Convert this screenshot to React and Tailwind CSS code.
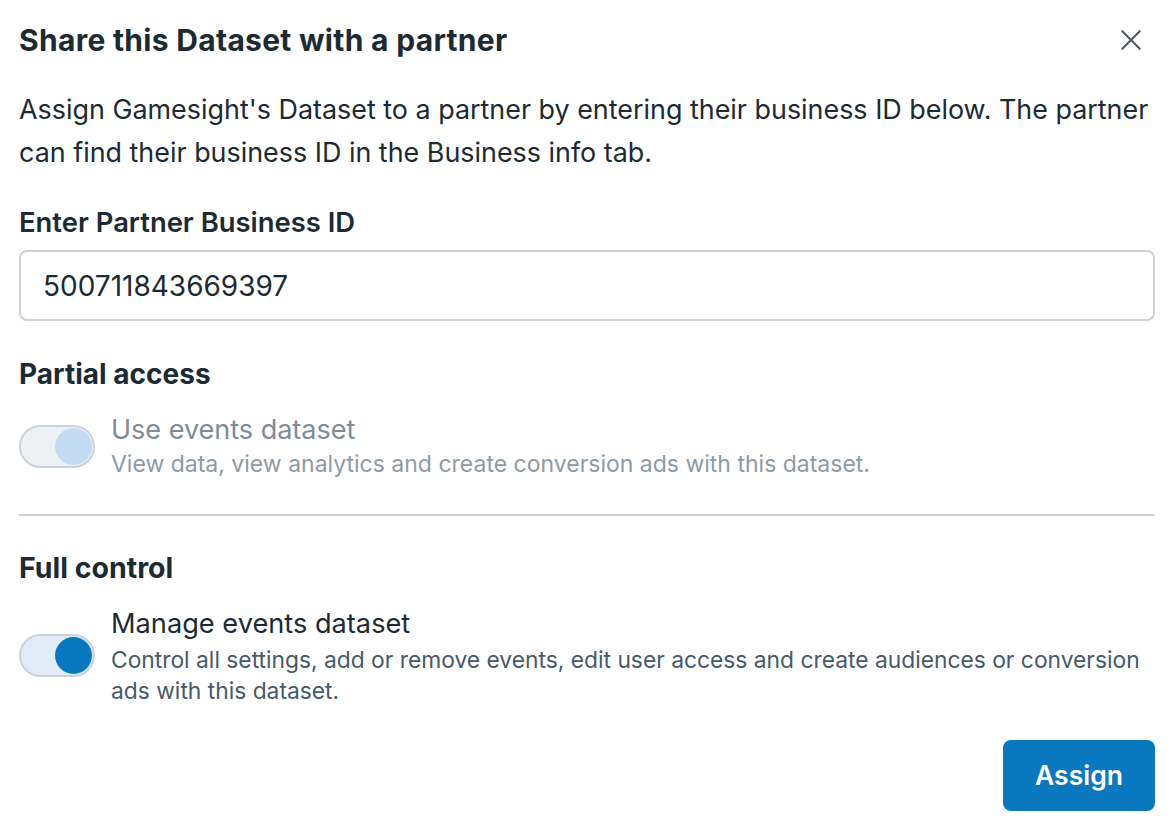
import React, { useState } from "react";

const Toggle = ({ disabled }) => (
  <div
    className={
      disabled
        ? "relative w-[76px] h-[43px] shrink-0 rounded-full border-2 border-[#cbd2d9] bg-[#eef1f4]"
        : "relative w-[76px] h-[43px] shrink-0 rounded-full border-2 border-[#cbd2d9] bg-[#e1ecf6]"
    }
  >
    <div
      className={
        disabled
          ? "absolute top-[1px] right-[1px] w-[37px] h-[37px] rounded-full bg-[#c1dcf4]"
          : "absolute top-[1px] right-[1px] w-[37px] h-[37px] rounded-full bg-[#0a78be]"
      }
    />
  </div>
);

export default function App() {
  const [id, setId] = useState("500711843669397");

  return (
    <div className="w-[1174px] h-[834px] bg-white px-[19px] text-[#1c2b33] font-['Inter',sans-serif]">
      {/* header */}
      <div className="flex items-center justify-between h-[80px]">
        <h2 className="text-[30px] font-bold tracking-[0.3px]">Share this Dataset with a partner</h2>
        <button className="w-[40px] h-[40px] flex items-center justify-center text-[#4f5b64] mr-[4px]">
          <svg width="30" height="30" viewBox="0 0 24 24" fill="none" stroke="currentColor" strokeWidth="1.7" strokeLinecap="round">
            <path d="M5 5l14 14M19 5L5 19" />
          </svg>
        </button>
      </div>

      <p className="text-[26.9px] leading-[43px] mt-[8px]">
        Assign Gamesight's Dataset to a partner by entering their business ID below. The partner can find their business ID in the Business info tab.
      </p>

      <label className="block text-[27.4px] font-semibold mt-[28px] leading-[40px]">Enter Partner Business ID</label>
      <input
        className="mt-[8px] w-full h-[71px] rounded-[8px] border-2 border-[#ccd2d9] px-[22px] text-[28px] text-[#1c2b33] outline-none"
        value={id}
        onChange={(e) => setId(e.target.value)}
      />

      <h3 className="text-[28px] font-bold mt-[33px] leading-[40px]">Partial access</h3>
      <div className="flex items-center gap-[16px] mt-[18px]">
        <Toggle disabled />
        <div>
          <div className="text-[27px] leading-[36px] text-[#7d8c97]">Use events dataset</div>
          <div className="text-[23px] leading-[32px] text-[#8d9ba6]">View data, view analytics and create conversion ads with this dataset.</div>
        </div>
      </div>

      <div className="h-[2px] bg-[#cbd2d9] mt-[34px]" />

      <h3 className="text-[28.5px] font-bold mt-[32px] leading-[40px]">Full control</h3>
      <div className="flex items-center gap-[16px] mt-[16px]">
        <Toggle />
        <div>
          <div className="text-[27.2px] leading-[40px]">Manage events dataset</div>
          <div className="text-[22.8px] leading-[31px] text-[#465a69]">
            Control all settings, add or remove events, edit user access and create audiences or conversion ads with this dataset.
          </div>
        </div>
      </div>

      <div className="flex justify-end mt-[34px]">
        <button className="w-[152px] h-[71px] rounded-[8px] bg-[#0a78be] text-white text-[26.5px] font-semibold">Assign</button>
      </div>
    </div>
  );
}
